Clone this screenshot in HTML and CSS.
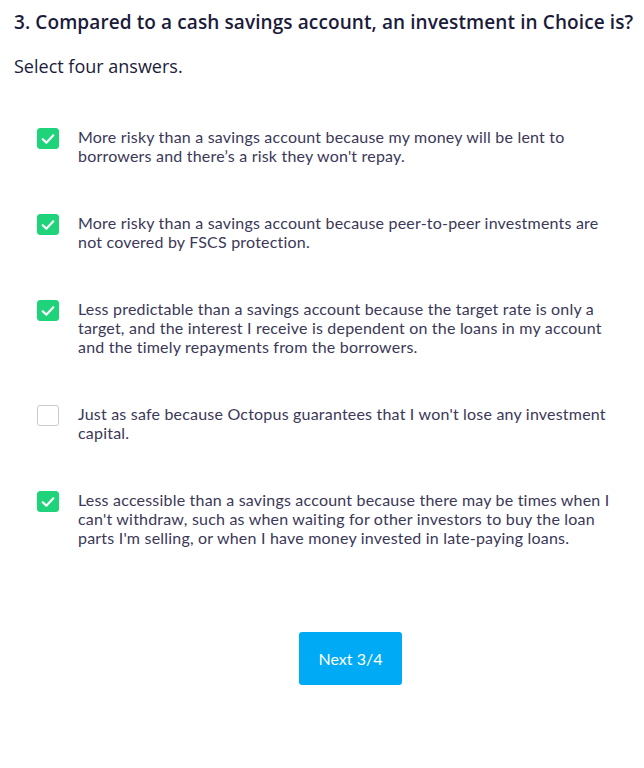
FILE: index.html
```html
<!DOCTYPE html>
<html>
<head>
<meta charset="utf-8">
<link rel="stylesheet" href="styles.css">
</head>
<body>
<div class="page">
  <h1 class="title">3. Compared to a cash savings account, an investment in Choice is?</h1>
  <p class="subtitle">Select four answers.</p>
  <ul class="options">
    <li class="option">
      <span class="box checked"><svg viewBox="0 0 22 22" width="22" height="22"><path d="M5.2 11.2 L9.2 15 L16.8 7" fill="none" stroke="#fff" stroke-width="2.4" stroke-linecap="round" stroke-linejoin="round"/></svg></span>
      <span class="label">More risky than a savings account because my money will be lent to borrowers and there’s a risk they won't repay.</span>
    </li>
    <li class="option">
      <span class="box checked"><svg viewBox="0 0 22 22" width="22" height="22"><path d="M5.2 11.2 L9.2 15 L16.8 7" fill="none" stroke="#fff" stroke-width="2.4" stroke-linecap="round" stroke-linejoin="round"/></svg></span>
      <span class="label">More risky than a savings account because peer-to-peer investments are not covered by FSCS protection.</span>
    </li>
    <li class="option">
      <span class="box checked"><svg viewBox="0 0 22 22" width="22" height="22"><path d="M5.2 11.2 L9.2 15 L16.8 7" fill="none" stroke="#fff" stroke-width="2.4" stroke-linecap="round" stroke-linejoin="round"/></svg></span>
      <span class="label">Less predictable than a savings account because the target rate is only a target, and the interest I receive is dependent on the loans in my account and the timely repayments from the borrowers.</span>
    </li>
    <li class="option">
      <span class="box"></span>
      <span class="label">Just as safe because Octopus guarantees that I won't lose any investment capital.</span>
    </li>
    <li class="option">
      <span class="box checked"><svg viewBox="0 0 22 22" width="22" height="22"><path d="M5.2 11.2 L9.2 15 L16.8 7" fill="none" stroke="#fff" stroke-width="2.4" stroke-linecap="round" stroke-linejoin="round"/></svg></span>
      <span class="label">Less accessible than a savings account because there may be times when I can't withdraw, such as when waiting for other investors to buy the loan parts I'm selling, or when I have money invested in late-paying loans.</span>
    </li>
  </ul>
  <div class="actions">
    <button class="next">Next 3/4</button>
  </div>
</div>
</body>
</html>
```
FILE: styles.css
```css
html, body {
  margin: 0;
  padding: 0;
  background: #ffffff;
}
.page {
  padding: 8px 0 0 14px;
  font-family: "Open Sans", "Noto Sans", sans-serif;
  color: #1b1b3a;
}
.title {
  margin: 0;
  font-size: 19px;
  font-weight: 600;
  line-height: 28px;
  white-space: nowrap;
  letter-spacing: 0.1px;
}
.subtitle {
  margin: 16px 0 0 0;
  font-size: 18px;
  font-weight: 400;
  line-height: 28px;
}
.options {
  list-style: none;
  margin: 47px 0 0 0;
  padding: 0 0 0 23px;
  display: flex;
  flex-direction: column;
  gap: 48px;
}
.option {
  display: flex;
  align-items: flex-start;
  gap: 19px;
}
.box {
  flex: none;
  width: 22px;
  height: 21px;
  border-radius: 3px;
  box-sizing: border-box;
  border: 1px solid #c9c9cf;
  background: #fff;
  margin-top: 1px;
  display: flex;
  align-items: center;
  justify-content: center;
}
.box.checked {
  background: #1fd37a;
  border-color: #1fd37a;
}
.box svg {
  display: block;
}
.label {
  width: 540px;
  font-family: "Lato", sans-serif;
  font-size: 16px;
  letter-spacing: 0.2px;
  line-height: 19px;
  color: #3b3858;
}
.actions {
  margin: 85px 0 0 285px;
}
.next {
  width: 103px;
  height: 53px;
  border: none;
  border-radius: 3px;
  background: #00aaf5;
  color: #ffffff;
  font-family: "Lato", sans-serif;
  font-size: 16px;
  cursor: pointer;
}
```
